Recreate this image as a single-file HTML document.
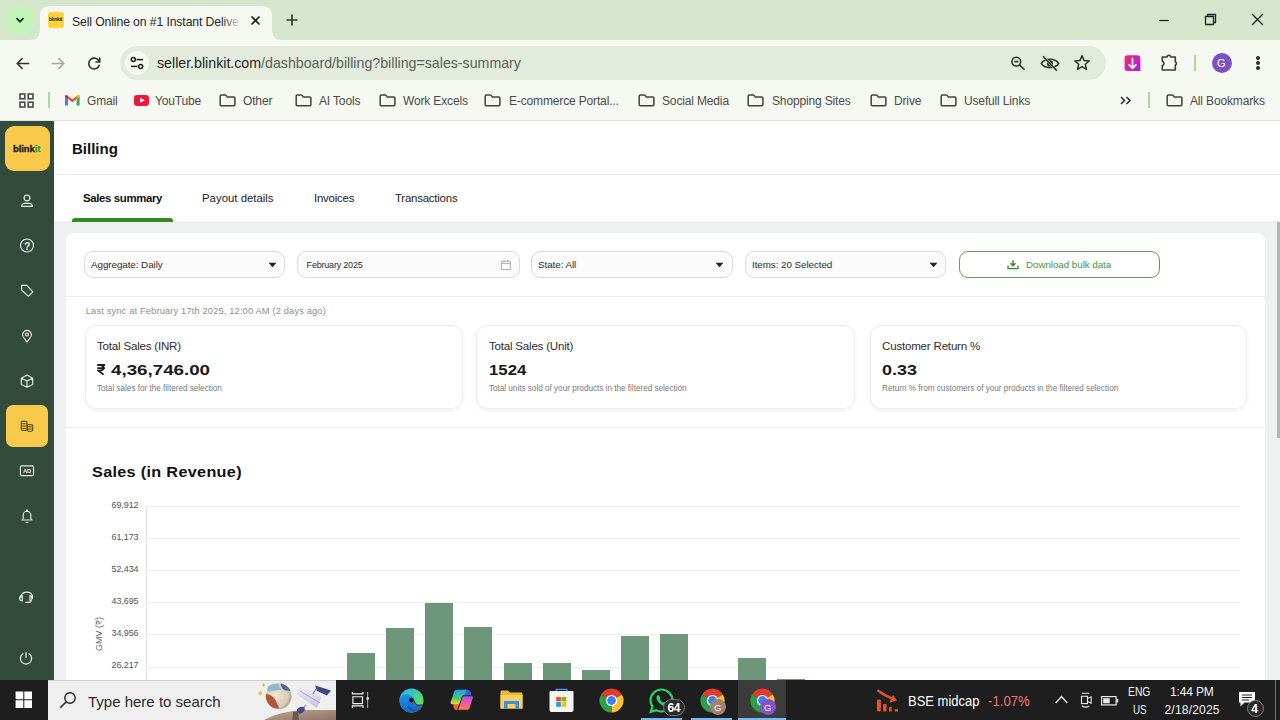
<!DOCTYPE html>
<html><head><meta charset="utf-8">
<style>
*{margin:0;padding:0;box-sizing:border-box}
html,body{width:1280px;height:720px;overflow:hidden;background:#fff;font-family:"Liberation Sans",sans-serif}
.abs{position:absolute}
#tabstrip{position:absolute;left:0;top:0;width:1280px;height:40px;background:#d5e6cd}
#toolbar{position:absolute;left:0;top:40px;width:1280px;height:80px;background:#f6f9f1}
#tbline{position:absolute;left:0;top:120px;width:1280px;height:1px;background:#dfe3dc}
#page{position:absolute;left:0;top:121px;width:1280px;height:559px;background:#eff1f0;overflow:hidden}
#sidebar{position:absolute;left:0;top:0;width:54px;height:559px;background:#334b3a}
#taskbar{position:absolute;left:0;top:680px;width:1280px;height:40px;background:#1e1e1e}
.bm{font-size:12px;color:#4a4c49;letter-spacing:-0.15px}
.box{background:#fbfbfb;border:1px solid #dcdcdc;border-radius:9px}
.ft{font-size:9.8px;color:#2e2e2e;letter-spacing:-0.05px}
.mcard{background:#fff;border:1px solid #ededed;border-radius:11px;box-shadow:0 2px 4px rgba(0,0,0,0.05)}
.t{position:absolute;white-space:nowrap;line-height:1}
</style></head><body>
<div id="tabstrip">
  <svg class="abs" style="left:0;top:0" width="300" height="40" viewBox="0 0 300 40"><path d="M30 40 Q40 40 40 30 V16 Q40 6 50 6 H262 Q272 6 272 16 V30 Q272 40 282 40 Z" fill="#f6f9f1"/></svg>
  <div class="abs" style="left:6px;top:6px;width:28px;height:28px;border-radius:8px;background:#c4f3bc"></div>
  <svg class="abs" style="left:14px;top:14px" width="12" height="12" viewBox="0 0 12 12"><path d="M2.5 4.2 L6 7.7 L9.5 4.2" fill="none" stroke="#1f2a1f" stroke-width="1.8"/></svg>
  <div class="abs" style="left:48px;top:12px;width:16px;height:16px;border-radius:3px;background:#fcd43a"></div>
  <div class="t" style="left:49px;top:17px;font-size:5px;font-weight:bold;color:#222;letter-spacing:-0.2px">blinkit</div>
  <div class="t" style="left:72px;top:16px;font-size:12.2px;color:#262626;letter-spacing:-0.1px">Sell Online on #1 Instant Delive</div>
  <div class="abs" style="left:222px;top:8px;width:20px;height:26px;background:linear-gradient(90deg,rgba(246,249,241,0),#f6f9f1)"></div>
  <svg class="abs" style="left:250px;top:15px" width="11" height="11" viewBox="0 0 11 11"><path d="M1.5 1.5 L9.5 9.5 M9.5 1.5 L1.5 9.5" stroke="#1f1f1f" stroke-width="1.7"/></svg>
  <svg class="abs" style="left:286px;top:14px" width="12" height="12" viewBox="0 0 12 12"><path d="M6 0.5 V11.5 M0.5 6 H11.5" stroke="#2c3a2c" stroke-width="1.7"/></svg>
  <svg class="abs" style="left:1158px;top:14px" width="12" height="12" viewBox="0 0 12 12"><path d="M1 6.5 H11" stroke="#1f1f1f" stroke-width="1.2"/></svg>
  <svg class="abs" style="left:1204px;top:13px" width="13" height="13" viewBox="0 0 13 13"><path d="M1.5 3.5 H9.5 V11.5 H1.5 Z M3.5 3.5 V1.5 H11.5 V9.5 H9.5" fill="none" stroke="#1f1f1f" stroke-width="1.3"/></svg>
  <svg class="abs" style="left:1251px;top:13px" width="13" height="13" viewBox="0 0 13 13"><path d="M1 1 L12 12 M12 1 L1 12" stroke="#1f1f1f" stroke-width="1.4"/></svg>
</div>
<div id="toolbar">
  <svg class="abs" style="left:13.8px;top:14px" width="18" height="18" viewBox="0 0 18 18"><path d="M15.3 9.5 H3.6 M8.6 4.1 L3.2 9.5 L8.6 14.9" fill="none" stroke="#333631" stroke-width="1.5"/></svg>
  <svg class="abs" style="left:49px;top:14px" width="18" height="18" viewBox="0 0 18 18"><path d="M2.7 9.5 H14.4 M9.4 4.1 L14.8 9.5 L9.4 14.9" fill="none" stroke="#a3a8a0" stroke-width="1.5"/></svg>
  <svg class="abs" style="left:85px;top:14px" width="18" height="18" viewBox="0 0 18 18"><path d="M14.2 7.6 A5.4 5.4 0 1 0 14.4 10.8" fill="none" stroke="#333631" stroke-width="1.6"/><path d="M14.8 3.6 V8 H10.4" fill="none" stroke="#333631" stroke-width="1.6"/></svg>
  <div class="abs" style="left:120px;top:6px;width:986px;height:34px;border-radius:17px;background:#e3ebdd"></div>
  <div class="abs" style="left:125px;top:11px;width:24px;height:24px;border-radius:12px;background:#f6f9f1"></div>
  <svg class="abs" style="left:129px;top:15px" width="16" height="16" viewBox="0 0 16 16"><circle cx="4.3" cy="4.6" r="2" fill="none" stroke="#1f1f1f" stroke-width="1.5"/><path d="M7.5 4.6 H14" stroke="#1f1f1f" stroke-width="1.5"/><circle cx="11.7" cy="11.4" r="2" fill="none" stroke="#1f1f1f" stroke-width="1.5"/><path d="M2 11.4 H8.5" stroke="#1f1f1f" stroke-width="1.5"/></svg>
  <div class="t" style="left:157px;top:16px;font-size:14.2px;color:#1f1f1f">seller.blinkit.com<span style="color:#5b605b">/dashboard/billing?billing=sales-summary</span></div>
  <svg class="abs" style="left:1008px;top:14px" width="18" height="18" viewBox="0 0 18 18"><circle cx="8.3" cy="7.6" r="4.4" fill="none" stroke="#30332f" stroke-width="1.6"/><path d="M6.3 7.6 H10.3 M11.5 10.9 L16.5 15.8" stroke="#30332f" stroke-width="1.6"/></svg>
  <svg class="abs" style="left:1040px;top:13px" width="20" height="20" viewBox="0 0 20 20"><path d="M1.3 10.4 C4.5 4.8 15.5 4.8 18.7 10.4 C15.5 16 4.5 16 1.3 10.4 Z" fill="none" stroke="#30332f" stroke-width="1.6"/><circle cx="10" cy="10.4" r="3.1" fill="#30332f"/><path d="M3 3.2 L16.8 17.6" stroke="#e3ebdd" stroke-width="2.3"/><path d="M3 3.2 L16.8 17.6" stroke="#30332f" stroke-width="1.6"/></svg>
  <svg class="abs" style="left:1073px;top:14px" width="18" height="18" viewBox="0 0 18 18"><path d="M9 1.8 L11.1 6.6 L16.2 7 L12.3 10.3 L13.5 15.4 L9 12.7 L4.5 15.4 L5.7 10.3 L1.8 7 L6.9 6.6 Z" fill="none" stroke="#2b2f2b" stroke-width="1.5" stroke-linejoin="round"/></svg>
  <svg class="abs" style="left:1124px;top:15px" width="17" height="17" viewBox="0 0 17 17"><defs><linearGradient id="dlg" x1="0" y1="0" x2="1" y2="1"><stop offset="0" stop-color="#ec3060"/><stop offset="0.5" stop-color="#d022b0"/><stop offset="1" stop-color="#a51ef2"/></linearGradient></defs><path d="M3.5 0.3 H13 Q16.4 0.3 16.4 3.7 V16 H3.5 Q0.6 16 0.6 13 V3.5 Q0.6 0.3 3.5 0.3 Z" fill="url(#dlg)"/><path d="M8.5 2.8 V13.2 M4.6 9.3 L8.5 13.2 L12.4 9.3" fill="none" stroke="#fff" stroke-width="1.7"/></svg>
  <svg class="abs" style="left:1159px;top:13px" width="20" height="20" viewBox="0 0 20 20"><path d="M3.3 4 H8.2 A1.7 1.7 0 0 1 11.6 4 H16.3 V9.1 A1.5 1.5 0 0 1 16.3 12 V17 H3.3 V12.6 A2.3 2.3 0 0 0 3.3 8.2 Z" fill="none" stroke="#3c3d39" stroke-width="1.6" stroke-linejoin="round"/></svg>
  <div class="abs" style="left:1194px;top:15px;width:2px;height:16px;background:#a6dba0"></div>
  <div class="abs" style="left:1212px;top:13px;width:20px;height:20px;border-radius:10px;background:#7c52c2"></div>
  <div class="t" style="left:1217px;top:17.5px;font-size:11px;color:#fff">G</div>
  <div class="abs" style="left:1256px;top:16px;width:4px;height:4px;border-radius:2px;background:#2b2f2b"></div>
  <div class="abs" style="left:1256px;top:21px;width:4px;height:4px;border-radius:2px;background:#2b2f2b"></div>
  <div class="abs" style="left:1256px;top:26px;width:4px;height:4px;border-radius:2px;background:#2b2f2b"></div>
  <!-- bookmarks -->
  <svg class="abs" style="left:19px;top:53px" width="15" height="15" viewBox="0 0 15 15"><g fill="none" stroke="#474a47" stroke-width="1.6"><rect x="1" y="1" width="4.8" height="4.8"/><rect x="9.2" y="1" width="4.8" height="4.8"/><rect x="1" y="9.2" width="4.8" height="4.8"/><rect x="9.2" y="9.2" width="4.8" height="4.8"/></g></svg>
  <div class="abs" style="left:48px;top:52px;width:2px;height:16px;background:#a6dba0"></div>
  <svg class="abs" style="left:65px;top:55px" width="15" height="11" viewBox="0 0 15 11"><path d="M0 1.5 V10.5 H3 V4 Z" fill="#4285f4"/><path d="M14.6 1.5 V10.5 H11.6 V4 Z" fill="#34a853"/><path d="M0 1.5 Q0 0 1.5 0 L7.3 4.6 L13.1 0 Q14.6 0 14.6 1.5 L7.3 7.3 Z" fill="#ea4335"/><path d="M11.6 1.2 L13.1 0 Q14.6 0 14.6 1.5 L11.6 4 Z" fill="#fbbc04"/><path d="M0 1.5 Q0 0 1.5 0 L3 1.2 V4 L0 1.6Z" fill="#c5221f"/></svg>
  <div class="t bm" style="left:87px;top:54.5px">Gmail</div>
  <div class="abs" style="left:133.8px;top:55px;width:15.6px;height:10.6px;border-radius:3px;background:#f0163a"></div>
  <svg class="abs" style="left:139px;top:57px" width="7" height="7" viewBox="0 0 7 7"><path d="M1 0.8 L5.8 3.3 L1 5.8 Z" fill="#fff"/></svg>
  <div class="t bm" style="left:155px;top:54.5px">YouTube</div>
  <svg class="abs" style="left:219px;top:54px" width="17" height="13" viewBox="0 0 17 13"><path d="M1.2 2 Q1.2 0.9 2.3 0.9 H6 Q6.6 0.9 7 1.4 L8 2.6 Q8.4 3 9 3 H14.8 Q15.9 3 15.9 4.1 V10.6 Q15.9 11.7 14.8 11.7 H2.3 Q1.2 11.7 1.2 10.6 Z" fill="none" stroke="#40413d" stroke-width="1.5"/></svg>
  <div class="t bm" style="left:243px;top:54.5px">Other</div>
  <svg class="abs" style="left:295px;top:54px" width="17" height="13" viewBox="0 0 17 13"><path d="M1.2 2 Q1.2 0.9 2.3 0.9 H6 Q6.6 0.9 7 1.4 L8 2.6 Q8.4 3 9 3 H14.8 Q15.9 3 15.9 4.1 V10.6 Q15.9 11.7 14.8 11.7 H2.3 Q1.2 11.7 1.2 10.6 Z" fill="none" stroke="#40413d" stroke-width="1.5"/></svg>
  <div class="t bm" style="left:319px;top:54.5px">AI Tools</div>
  <svg class="abs" style="left:379px;top:54px" width="17" height="13" viewBox="0 0 17 13"><path d="M1.2 2 Q1.2 0.9 2.3 0.9 H6 Q6.6 0.9 7 1.4 L8 2.6 Q8.4 3 9 3 H14.8 Q15.9 3 15.9 4.1 V10.6 Q15.9 11.7 14.8 11.7 H2.3 Q1.2 11.7 1.2 10.6 Z" fill="none" stroke="#40413d" stroke-width="1.5"/></svg>
  <div class="t bm" style="left:403px;top:54.5px">Work Excels</div>
  <svg class="abs" style="left:484px;top:54px" width="17" height="13" viewBox="0 0 17 13"><path d="M1.2 2 Q1.2 0.9 2.3 0.9 H6 Q6.6 0.9 7 1.4 L8 2.6 Q8.4 3 9 3 H14.8 Q15.9 3 15.9 4.1 V10.6 Q15.9 11.7 14.8 11.7 H2.3 Q1.2 11.7 1.2 10.6 Z" fill="none" stroke="#40413d" stroke-width="1.5"/></svg>
  <div class="t bm" style="left:509px;top:54.5px">E-commerce Portal...</div>
  <svg class="abs" style="left:638px;top:54px" width="17" height="13" viewBox="0 0 17 13"><path d="M1.2 2 Q1.2 0.9 2.3 0.9 H6 Q6.6 0.9 7 1.4 L8 2.6 Q8.4 3 9 3 H14.8 Q15.9 3 15.9 4.1 V10.6 Q15.9 11.7 14.8 11.7 H2.3 Q1.2 11.7 1.2 10.6 Z" fill="none" stroke="#40413d" stroke-width="1.5"/></svg>
  <div class="t bm" style="left:662px;top:54.5px">Social Media</div>
  <svg class="abs" style="left:747px;top:54px" width="17" height="13" viewBox="0 0 17 13"><path d="M1.2 2 Q1.2 0.9 2.3 0.9 H6 Q6.6 0.9 7 1.4 L8 2.6 Q8.4 3 9 3 H14.8 Q15.9 3 15.9 4.1 V10.6 Q15.9 11.7 14.8 11.7 H2.3 Q1.2 11.7 1.2 10.6 Z" fill="none" stroke="#40413d" stroke-width="1.5"/></svg>
  <div class="t bm" style="left:772px;top:54.5px">Shopping Sites</div>
  <svg class="abs" style="left:870px;top:54px" width="17" height="13" viewBox="0 0 17 13"><path d="M1.2 2 Q1.2 0.9 2.3 0.9 H6 Q6.6 0.9 7 1.4 L8 2.6 Q8.4 3 9 3 H14.8 Q15.9 3 15.9 4.1 V10.6 Q15.9 11.7 14.8 11.7 H2.3 Q1.2 11.7 1.2 10.6 Z" fill="none" stroke="#40413d" stroke-width="1.5"/></svg>
  <div class="t bm" style="left:894px;top:54.5px">Drive</div>
  <svg class="abs" style="left:940px;top:54px" width="17" height="13" viewBox="0 0 17 13"><path d="M1.2 2 Q1.2 0.9 2.3 0.9 H6 Q6.6 0.9 7 1.4 L8 2.6 Q8.4 3 9 3 H14.8 Q15.9 3 15.9 4.1 V10.6 Q15.9 11.7 14.8 11.7 H2.3 Q1.2 11.7 1.2 10.6 Z" fill="none" stroke="#40413d" stroke-width="1.5"/></svg>
  <div class="t bm" style="left:964px;top:54.5px">Usefull Links</div>
  <svg class="abs" style="left:1166px;top:54px" width="17" height="13" viewBox="0 0 17 13"><path d="M1.2 2 Q1.2 0.9 2.3 0.9 H6 Q6.6 0.9 7 1.4 L8 2.6 Q8.4 3 9 3 H14.8 Q15.9 3 15.9 4.1 V10.6 Q15.9 11.7 14.8 11.7 H2.3 Q1.2 11.7 1.2 10.6 Z" fill="none" stroke="#40413d" stroke-width="1.5"/></svg>
  <div class="t bm" style="left:1190px;top:54.5px">All Bookmarks</div>
  <svg class="abs" style="left:1120px;top:56px" width="12" height="9" viewBox="0 0 12 9"><path d="M1 1 L4.5 4.5 L1 8 M6.5 1 L10 4.5 L6.5 8" fill="none" stroke="#2b2f2b" stroke-width="1.5"/></svg>
  <div class="abs" style="left:1148px;top:52px;width:2px;height:16px;background:#a6dba0"></div>
</div>
<div id="tbline"></div>
<div id="page">
  <div id="sidebar">
    <div class="abs" style="left:5px;top:5px;width:45px;height:45px;border-radius:9px;background:#f8c94a"></div>
    <div class="t" style="left:13px;top:22.8px;font-size:9.4px;font-weight:bold;color:#1d1d1b;letter-spacing:-0.05px;-webkit-text-stroke:0.35px #1d1d1b">blink<span style="color:#2f9e2f;-webkit-text-stroke:0.35px #2f9e2f">it</span></div>
    <div class="abs" style="left:6px;top:284px;width:42px;height:42px;border-radius:7px;background:#f8c94a"></div>
    <svg class="abs" style="left:0;top:0" width="54" height="559" viewBox="0 121 54 559">
    <g fill="none" stroke="#e6ece6" stroke-width="1.15" stroke-linejoin="round" stroke-linecap="round">
      <circle cx="27" cy="198" r="2.9"/>
      <path d="M21.6 206.3 Q21.9 204.8 23 203.8 Q23.6 203.3 24.4 203.3 H29.6 Q30.4 203.3 31 203.8 Q32.1 204.8 32.4 206.3 Z"/>
      <circle cx="27" cy="245.5" r="6.5"/>
      <path d="M21.6 285.4 H26.8 L32.9 291.9 L28.4 296.3 L21.6 290 Z"/>
      <path d="M27 342.2 L23.3 337 A4.3 4.3 0 1 1 30.7 337 Z"/>
      <circle cx="27" cy="334.5" r="1.5"/>
      <path d="M27 375 L32.7 378.3 V384.4 L27 387.2 L21.3 384.4 V378.3 Z M21.3 378.3 L27 381 L32.7 378.3 M27 381 V387"/>
      <rect x="20.4" y="465.8" width="13.1" height="9.8" rx="1.4"/>
      <path d="M22 520 H32 L30.8 518.5 V515 A3.8 3.8 0 0 0 23.2 515 V518.5 Z M26 522.2 H28"/>
      <circle cx="27" cy="510.7" r="0.6"/>
      <path d="M21 598 V596 A6 5.5 0 0 1 32.5 596 V598 M31.3 600.5 Q31.2 602.3 29.5 602.3 H25.8"/>
      <path d="M22.3 595.6 V601 Q19.6 600.8 19.6 598.3 Q19.6 595.8 22.3 595.6 Z M30 595.6 V601 Q32 600.6 32 598.3 Q32 596 30 595.6 Z"/>
      <path d="M23 653.8 A5.6 5.6 0 1 0 29 653.8 M26 652.5 V657.6" stroke-width="1.25"/>
    </g>
    <text x="27.2" y="249.6" text-anchor="middle" font-family="Liberation Sans" font-weight="bold" font-size="10.5" fill="#e6ece6">?</text>
    <text x="27.1" y="473.2" text-anchor="middle" font-family="Liberation Sans" font-weight="bold" font-size="5.8" fill="#e6ece6">AD</text>
    <g fill="none" stroke="#5a521c" stroke-width="1.1">
      <rect x="21.2" y="421.4" width="5.8" height="9" rx="1.2"/>
      <path d="M21.5 423.7 H26.7 M21.5 426 H26.7 M21.5 428.2 H26.7"/>
      <rect x="27.4" y="424.6" width="5.3" height="6.6" rx="1.2"/>
      <path d="M27.6 426.8 H32.5 M27.6 429 H32.5"/>
    </g>
    </svg>
  </div>
  <div class="abs" style="left:54px;top:0;width:1226px;height:54px;background:#fff"></div>
  <div class="t" style="left:72px;top:20px;font-size:15px;font-weight:bold;color:#111">Billing</div>
  <div class="abs" style="left:54px;top:53px;width:1226px;height:1px;background:#ebebeb"></div>
  <div class="abs" style="left:54px;top:54px;width:1226px;height:46px;background:#fff"></div>
  <div class="t" style="left:83px;top:72px;font-size:11.4px;font-weight:bold;color:#111;letter-spacing:-0.35px">Sales summary</div>
  <div class="t" style="left:202px;top:72px;font-size:11.4px;color:#222;letter-spacing:0px">Payout details</div>
  <div class="t" style="left:314px;top:72px;font-size:11.4px;color:#222;letter-spacing:-0.2px">Invoices</div>
  <div class="t" style="left:395px;top:72px;font-size:11.4px;color:#222;letter-spacing:-0.2px">Transactions</div>
  <div class="abs" style="left:72px;top:97px;width:101px;height:4px;border-radius:3px 3px 0 0;background:#318b22"></div>
  <div class="abs" style="left:1277px;top:101px;width:3px;height:216px;background:#b5b7b6"></div>
  <div id="card" class="abs" style="left:66px;top:112px;width:1199px;height:600px;border-radius:8px;background:#fff">
    <div class="abs box" style="left:18px;top:18px;width:201px;height:27px"></div>
    <div class="t ft" style="left:25px;top:27.3px">Aggregate: Daily</div>
    <svg class="abs" style="left:202px;top:29px" width="9" height="6" viewBox="0 0 9 6"><path d="M0.5 0.8 H8.5 L4.5 5.2 Z" fill="#222"/></svg>
    <div class="abs box" style="left:231.3px;top:18px;width:222.7px;height:27px"></div>
    <div class="t ft" style="left:240.6px;top:27.6px;font-size:9px;letter-spacing:-0.2px">February 2025</div>
    <svg class="abs" style="left:434px;top:26px" width="11" height="11" viewBox="0 0 11 11"><path d="M1.4 2.3 H10.3 V10.5 H1.4 Z M1.4 4.4 H10.3 M3.9 1 V2.3 M7.8 1 V2.3" fill="none" stroke="#9a9a9a" stroke-width="0.8"/></svg>
    <div class="abs box" style="left:465px;top:18px;width:202px;height:27px"></div>
    <div class="t ft" style="left:472px;top:27.3px">State: All</div>
    <svg class="abs" style="left:649px;top:29px" width="9" height="6" viewBox="0 0 9 6"><path d="M0.5 0.8 H8.5 L4.5 5.2 Z" fill="#222"/></svg>
    <div class="abs box" style="left:679px;top:18px;width:201px;height:27px"></div>
    <div class="t ft" style="left:686px;top:27.3px">Items: 20 Selected</div>
    <svg class="abs" style="left:863px;top:29px" width="9" height="6" viewBox="0 0 9 6"><path d="M0.5 0.8 H8.5 L4.5 5.2 Z" fill="#222"/></svg>
    <div class="abs" style="left:893px;top:18px;width:201px;height:27px;border:1px solid #62a058;border-radius:9px"></div>
    <svg class="abs" style="left:941px;top:25px" width="12" height="12" viewBox="0 0 12 12"><path d="M6 2.2 V7.5 M3.5 5.2 L6 7.7 L8.5 5.2" fill="none" stroke="#3c8a33" stroke-width="1.5"/><path d="M1 7.6 V10.6 H11 V7.6" fill="none" stroke="#3c8a33" stroke-width="1.3"/></svg>
    <div class="t ft" style="left:960px;top:27.3px;color:#4a9341">Download bulk data</div>
    <div class="abs" style="left:0;top:63px;width:1199px;height:1px;background:#ececec"></div>
    <div class="t" style="left:19.8px;top:74px;font-size:9.3px;color:#8e8e8e;letter-spacing:0.15px">Last sync at February 17th 2025, 12:00 AM (2 days ago)</div>
    <div class="abs mcard" style="left:18.6px;top:92.4px;width:378px;height:83.4px"></div>
    <div class="t" style="left:31.0px;top:107.2px;font-size:11.6px;color:#2e2e2e;letter-spacing:-0.22px">Total Sales (INR)</div>
    <div class="t" style="left:31.0px;top:128.8px;font-size:15px;font-weight:bold;color:#1a1a1a"><svg class="abs" style="left:-0.5px;top:2px" width="9" height="11" viewBox="0 0 9 11"><path d="M0.3 1 H8 M0.3 4.2 H8 M1 1 H3.2 C5.6 1 6.4 2.4 6.4 3.8 C6.4 5.6 5 6.7 2.8 6.7 H1.3 L6.6 10.6" fill="none" stroke="#1a1a1a" stroke-width="1.8" stroke-linejoin="miter"/></svg><span style="display:inline-block;margin-left:14.3px;transform:scaleX(1.25);transform-origin:left top">4,36,746.00</span></div>
    <div class="t" style="left:31.0px;top:151.8px;font-size:8.2px;color:#7a7a7a;letter-spacing:-0.02px">Total sales for the filtered selection</div>
    <div class="abs mcard" style="left:409.8px;top:92.4px;width:379.7px;height:83.4px"></div>
    <div class="t" style="left:422.9px;top:107.2px;font-size:11.6px;color:#2e2e2e;letter-spacing:-0.22px">Total Sales (Unit)</div>
    <div class="t" style="left:422.9px;top:128.8px;font-size:15px;font-weight:bold;color:#1a1a1a;transform:scaleX(1.12);transform-origin:left top">1524</div>
    <div class="t" style="left:422.9px;top:151.8px;font-size:8.2px;color:#7a7a7a;letter-spacing:-0.02px">Total units sold of your products in the filtered selection</div>
    <div class="abs mcard" style="left:803.8px;top:92.4px;width:377.5px;height:83.4px"></div>
    <div class="t" style="left:816px;top:107.2px;font-size:11.6px;color:#2e2e2e;letter-spacing:-0.22px">Customer Return %</div>
    <div class="t" style="left:816px;top:128.8px;font-size:15px;font-weight:bold;color:#1a1a1a;transform:scaleX(1.2);transform-origin:left top">0.33</div>
    <div class="t" style="left:816px;top:151.8px;font-size:8.2px;color:#7a7a7a;letter-spacing:-0.02px">Return % from customers of your products in the filtered selection</div>
    
    <div class="abs" style="left:0;top:194px;width:1199px;height:1px;background:#ececec"></div>
    <div class="t" style="left:26px;top:231.1px;font-size:15px;font-weight:bold;color:#111;letter-spacing:0.3px;transform:scaleX(1.08);transform-origin:left top">Sales (in Revenue)</div>
    <div class="abs" style="left:80px;top:273.0px;width:1094px;height:1px;background:#efefef"></div>
    <div class="t" style="right:1126.5px;top:267.7px;font-size:9px;color:#555;letter-spacing:-0.1px">69,912</div>
    <div class="abs" style="left:80px;top:305.1px;width:1094px;height:1px;background:#efefef"></div>
    <div class="t" style="right:1126.5px;top:299.8px;font-size:9px;color:#555;letter-spacing:-0.1px">61,173</div>
    <div class="abs" style="left:80px;top:337.2px;width:1094px;height:1px;background:#efefef"></div>
    <div class="t" style="right:1126.5px;top:331.9px;font-size:9px;color:#555;letter-spacing:-0.1px">52,434</div>
    <div class="abs" style="left:80px;top:369.3px;width:1094px;height:1px;background:#efefef"></div>
    <div class="t" style="right:1126.5px;top:364.0px;font-size:9px;color:#555;letter-spacing:-0.1px">43,695</div>
    <div class="abs" style="left:80px;top:401.4px;width:1094px;height:1px;background:#efefef"></div>
    <div class="t" style="right:1126.5px;top:396.1px;font-size:9px;color:#555;letter-spacing:-0.1px">34,956</div>
    <div class="abs" style="left:80px;top:433.5px;width:1094px;height:1px;background:#efefef"></div>
    <div class="t" style="right:1126.5px;top:428.2px;font-size:9px;color:#555;letter-spacing:-0.1px">26,217</div>
    <div class="abs" style="left:80px;top:273px;width:1px;height:200px;background:#e2e2e2"></div>
    <div class="t" style="left:33px;top:401px;font-size:9px;color:#666;transform:translate(-50%,-50%) rotate(-90deg);transform-origin:center">GMV (<svg width="5" height="7" viewBox="0 0 5 7" style="display:inline-block;vertical-align:-0.5px"><path d="M0.3 0.7 H4.7 M0.3 2.5 H4.7 M0.8 0.7 H2 C3.4 0.7 3.8 1.6 3.8 2.4 C3.8 3.5 3 4.1 1.8 4.1 H0.9 L3.9 6.7" fill="none" stroke="#666" stroke-width="0.7"/></svg>)</div>
    <div class="abs" style="left:281.30px;top:419.8px;width:28px;height:200px;background:#6e977a"></div>
    <div class="abs" style="left:320.35px;top:394.5px;width:28px;height:200px;background:#6e977a"></div>
    <div class="abs" style="left:359.40px;top:369.6px;width:28px;height:200px;background:#6e977a"></div>
    <div class="abs" style="left:398.45px;top:393.8px;width:28px;height:200px;background:#6e977a"></div>
    <div class="abs" style="left:437.50px;top:429.6px;width:28px;height:200px;background:#6e977a"></div>
    <div class="abs" style="left:476.55px;top:429.8px;width:28px;height:200px;background:#6e977a"></div>
    <div class="abs" style="left:515.60px;top:437.0px;width:28px;height:200px;background:#6e977a"></div>
    <div class="abs" style="left:554.65px;top:402.8px;width:28px;height:200px;background:#6e977a"></div>
    <div class="abs" style="left:593.70px;top:401.2px;width:28px;height:200px;background:#6e977a"></div>
    <div class="abs" style="left:671.80px;top:425.0px;width:28px;height:200px;background:#6e977a"></div>
    <div class="abs" style="left:710.85px;top:445.5px;width:28px;height:200px;background:#6e977a"></div>
    

  </div>

</div>
<div id="taskbar">
  <svg class="abs" style="left:15px;top:11px" width="18" height="18" viewBox="0 0 18 18"><path d="M0.6 0.6 H8.3 V8.3 H0.6 Z M9.3 0.6 H17 V8.3 H9.3 Z M0.6 9.3 H8.3 V17 H0.6 Z M9.3 9.3 H17 V17 H9.3 Z" fill="#fff"/></svg>
  <div class="abs" style="left:48px;top:0;width:288px;height:40px;background:#efefef;border-top:1px solid #cdcdcd"></div>
  <svg class="abs" style="left:59px;top:11px" width="18" height="18" viewBox="0 0 18 18"><circle cx="11" cy="7" r="5.2" fill="none" stroke="#222" stroke-width="1.4"/><path d="M7.3 10.7 L1.2 16.8" stroke="#222" stroke-width="1.5"/></svg>
  <div class="t" style="left:88px;top:14px;font-size:15px;color:#2a2a2a">Type here to search</div>
  <svg class="abs" style="left:255px;top:0px" width="81" height="40" viewBox="0 0 81 40">
    <defs>
      <linearGradient id="hill" x1="0" y1="0" x2="1" y2="1"><stop offset="0" stop-color="#c2a895"/><stop offset="1" stop-color="#8d7262"/></linearGradient>
      <radialGradient id="glb" cx="0.4" cy="0.45" r="0.6"><stop offset="0" stop-color="#efe4d0"/><stop offset="0.8" stop-color="#d9cbb3"/><stop offset="1" stop-color="#a8a391"/></radialGradient>
      <linearGradient id="tube" x1="0" y1="0" x2="0" y2="1"><stop offset="0" stop-color="#f4f2fb"/><stop offset="1" stop-color="#c4c0e0"/></linearGradient>
    </defs>
    <path d="M9 40 Q25 31 50 30 H81 V40 Z" fill="url(#hill)"/>
    <circle cx="23.6" cy="16.3" r="12.9" fill="url(#glb)"/>
    <path d="M11 14 C15 14 19 17 21 21 C22 24 24 26 24 28.5 C17 29 11.5 24 10.9 17 Z" fill="#b5553a"/>
    <path d="M13 6.5 C16 4 21 3.4 23.5 3.6 C23 6 25 8 27 10 C22 10 17 11 12.5 11.5 C12 9.5 12.3 8 13 6.5 Z" fill="#8fb7cf"/>
    <path d="M25.5 3.5 C30 4.2 34 7 35.5 11 C32 11 29.5 10 27.5 9 C26.5 7 25.8 5.5 25.5 3.5 Z" fill="#4b6b95"/>
    <path d="M8.6 3 L10.3 5 L8.6 7 L6.9 5 Z M5.3 10.8 L7.6 13.3 L5.3 15.8 L3 13.3 Z" fill="#e6c43c"/>
    <path d="M41.5 14 L45.8 4.6 L66.4 17 L62 28 Z" fill="url(#tube)"/><path d="M58 14 L61 9" stroke="#8a86b8" stroke-width="1.4"/>
    <path d="M45 11 L65 23" stroke="#9f9ac8" stroke-width="0.8"/>
    <path d="M60 5.5 L65 7 L76 10.5 L72 15.5 L62 11 Z" fill="#3f4788"/>
    <path d="M51 25 L47 30" stroke="#9b98c0" stroke-width="1.6"/>
    <ellipse cx="45.8" cy="30.2" rx="4.2" ry="3" fill="#434a8e" transform="rotate(-30 45.8 30.2)"/>
    <path d="M38 32 L43 31 L44 40 L37.5 40 Z" fill="#6d5953"/>
  </svg>
  <svg class="abs" style="left:350px;top:11px" width="20" height="18" viewBox="0 0 20 18"><g fill="none" stroke="#f2f2f2" stroke-width="1.15"><path d="M2.4 1 V2.9 H13 V1 M2.9 5.7 H12.5 V12.6 H2.9 Z M2.4 17 V14.9 H13 V17"/></g><path d="M17.6 1 V17" stroke="#a8a8a8" stroke-width="1"/><rect x="16.5" y="6.3" width="2.3" height="2.3" fill="#f2f2f2"/></svg>
  <svg class="abs" style="left:399px;top:8px" width="25" height="25" viewBox="0 0 25 25">
    <defs><linearGradient id="eg1" x1="0" y1="0" x2="1" y2="0.6"><stop offset="0" stop-color="#2fb4ea"/><stop offset="0.55" stop-color="#3cc8b0"/><stop offset="1" stop-color="#66de52"/></linearGradient><linearGradient id="eg2" x1="0" y1="0" x2="0.3" y2="1"><stop offset="0" stop-color="#1f97e8"/><stop offset="1" stop-color="#1565c8"/></linearGradient></defs>
    <circle cx="12.5" cy="12.5" r="12" fill="url(#eg1)"/>
    <path d="M1 9.5 C3 6.8 6.5 5.8 9.5 6.5 C13 7.3 15 9.8 15.2 12.8 C15.5 15.5 17.5 17.3 20.5 17.3 C21.6 17.3 22.6 17 23.3 16.6 C21.6 21.5 17.4 24.5 12.5 24.5 C5.9 24.5 0.5 19.1 0.5 12.5 C0.5 11.4 0.7 10.4 1 9.5 Z" fill="url(#eg2)"/>
    <path d="M9 18 C11 21.5 15 23 19 22.5" fill="none" stroke="#0f56a8" stroke-width="2" opacity="0.6"/>
    <circle cx="12.4" cy="12.2" r="2.4" fill="#1e1e1e"/>
    <path d="M15.2 12.8 C15.5 15.5 17.5 17.3 20.5 17.3 C21.6 17.3 22.6 17 23.3 16.6" fill="none" stroke="#1b1b1b" stroke-width="1"/>
  </svg>
  <svg class="abs" style="left:450px;top:9px" width="24" height="22" viewBox="0 0 24 22">
    <defs><linearGradient id="cp1" x1="0" y1="0" x2="0" y2="1"><stop offset="0" stop-color="#2a9cf5"/><stop offset="0.55" stop-color="#3fc97a"/><stop offset="1" stop-color="#f6d21a"/></linearGradient><linearGradient id="cp2" x1="0" y1="0" x2="0" y2="1"><stop offset="0" stop-color="#a852e8"/><stop offset="0.55" stop-color="#f05aa0"/><stop offset="1" stop-color="#ff8a3a"/></linearGradient></defs>
    <path d="M13 0.8 H17.5 Q20.6 0.8 21 4.5 L21.4 8 H13 Z" fill="#2e5fe6"/>
    <path d="M3.5 14.5 H11 V21.2 H7.5 Q4 21.2 3.5 17.5 Z" fill="#f0623a"/>
    <path d="M6.3 0.8 H16.5 L11.3 15.2 H2.2 Q0.1 15.2 0.7 13.1 L4.1 2.8 Q4.8 0.8 6.3 0.8 Z" fill="url(#cp1)"/>
    <path d="M17.7 21.2 H7.5 L12.7 6.8 H21.8 Q23.9 6.8 23.3 8.9 L19.9 19.2 Q19.2 21.2 17.7 21.2 Z" fill="url(#cp2)" stroke="#1c1c1c" stroke-width="0.9"/>
  </svg>
  <svg class="abs" style="left:500px;top:10px" width="23" height="20" viewBox="0 0 23 20"><path d="M0.5 2 C0.5 1 1 0.5 2 0.5 H8 L10 2.5 H21 C22 2.5 22.5 3 22.5 4 V18.5 H0.5 Z" fill="#e9b93a"/><path d="M0.5 5 H22.5 V18.5 H0.5 Z" fill="#f7d063"/><path d="M4 18.5 V11 H19 V18.5 H15.5 V14 H7.5 V18.5 Z" fill="#3d8fdc"/></svg>
  <svg class="abs" style="left:549px;top:8px" width="25" height="25" viewBox="0 0 25 25"><path d="M6.5 5 L7.3 1.3 H17.7 L18.5 5" fill="none" stroke="#3fa1e8" stroke-width="1.3"/><path d="M0.5 4 Q0.5 3 1.5 3 H23.5 Q24.5 3 24.5 4 V22 Q24.5 24 22.5 24 H2.5 Q0.5 24 0.5 22 Z" fill="#f4f4f4"/><rect x="7.2" y="9" width="4.7" height="4.4" fill="#f25022"/><rect x="12.6" y="9" width="4.7" height="4.4" fill="#7fba00"/><rect x="7.2" y="14.2" width="4.7" height="4.6" fill="#00a4ef"/><rect x="12.6" y="14.2" width="4.7" height="4.6" fill="#ffb900"/></svg>
  <svg class="abs" style="left:599.2px;top:7.5px" width="25" height="25" viewBox="0 0 25 25">
    <path d="M12.5 12.5 L2.1 6.5 A12 12 0 0 1 22.9 6.5 Z" fill="#e33b2e"/>
    <path d="M12.5 12.5 L22.9 6.5 A12 12 0 0 1 12.5 24.5 Z" fill="#fbc02d"/>
    <path d="M12.5 12.5 L12.5 24.5 A12 12 0 0 1 2.1 6.5 Z" fill="#2e9e48"/>
    <circle cx="12.5" cy="12.5" r="5.6" fill="#fff"/><circle cx="12.5" cy="12.5" r="4.4" fill="#3c7ff0"/></svg>
  <svg class="abs" style="left:649px;top:8px" width="26" height="26" viewBox="0 0 26 26"><path d="M12.5 1.5 C18.6 1.5 23.5 6.4 23.5 12.5 C23.5 18.6 18.6 23.5 12.5 23.5 C10.6 23.5 8.8 23 7.3 22.2 L1.8 23.8 L3.5 18.5 C2.3 16.8 1.5 14.7 1.5 12.5 C1.5 6.4 6.4 1.5 12.5 1.5 Z" fill="none" stroke="#2bd366" stroke-width="2.2"/><path d="M8.5 7.5 C9 7 9.8 7 10.2 7.6 L11.2 9.6 C11.4 10 11.2 10.5 10.8 10.9 C11.5 12.5 12.6 13.8 14.3 14.6 C14.7 14.2 15.2 14 15.6 14.2 L17.5 15.2 C18 15.5 18 16.3 17.5 16.8 C16.5 17.8 15 18 13 17 C10.5 15.8 8.5 13.5 7.7 11 C7.2 9.5 7.7 8.3 8.5 7.5 Z" fill="#2bd366"/></svg>
  <div class="abs" style="left:663px;top:19px;width:22px;height:17px;border-radius:9px;background:#2b2b2b;border:1px solid #777"></div>
  <div class="t" style="left:667.5px;top:22px;font-size:12px;font-weight:bold;color:#fff;letter-spacing:-0.3px">64</div>
  <div class="abs" style="left:738px;top:0;width:48px;height:40px;background:#3b3b3b"></div><svg class="abs" style="left:699.5px;top:7.5px" width="25" height="25" viewBox="0 0 25 25">
    <path d="M12.5 12.5 L2.1 6.5 A12 12 0 0 1 22.9 6.5 Z" fill="#e33b2e"/>
    <path d="M12.5 12.5 L22.9 6.5 A12 12 0 0 1 12.5 24.5 Z" fill="#fbc02d"/>
    <path d="M12.5 12.5 L12.5 24.5 A12 12 0 0 1 2.1 6.5 Z" fill="#2e9e48"/>
    <circle cx="12.5" cy="12.5" r="5.6" fill="#fff"/><circle cx="12.5" cy="12.5" r="4.4" fill="#3c7ff0"/></svg><div class="abs" style="left:710px;top:19px;width:16px;height:16px;border-radius:8px;background:#a2806f"></div><div class="t" style="left:714px;top:23px;font-size:9.5px;color:#f3f3f3">G</div><svg class="abs" style="left:749.5px;top:7.5px" width="25" height="25" viewBox="0 0 25 25">
    <path d="M12.5 12.5 L2.1 6.5 A12 12 0 0 1 22.9 6.5 Z" fill="#e33b2e"/>
    <path d="M12.5 12.5 L22.9 6.5 A12 12 0 0 1 12.5 24.5 Z" fill="#fbc02d"/>
    <path d="M12.5 12.5 L12.5 24.5 A12 12 0 0 1 2.1 6.5 Z" fill="#2e9e48"/>
    <circle cx="12.5" cy="12.5" r="5.6" fill="#fff"/><circle cx="12.5" cy="12.5" r="4.4" fill="#3c7ff0"/></svg><div class="abs" style="left:760px;top:19px;width:16px;height:16px;border-radius:8px;background:#8553c9"></div><div class="t" style="left:764px;top:23px;font-size:9.5px;color:#f3f3f3">G</div><div class="abs" style="left:738px;top:38px;width:48px;height:2px;background:#76b9ed"></div>
  <div class="abs" style="left:641px;top:38px;width:41px;height:2px;background:#76b9ed"></div>
  <div class="abs" style="left:691px;top:38px;width:41px;height:2px;background:#76b9ed"></div>
  <svg class="abs" style="left:874px;top:9px" width="26" height="24" viewBox="0 0 26 24"><g fill="#e1532b"><path d="M4.2 1.7 Q11 7 18.5 9.6" fill="none" stroke="#e1532b" stroke-width="2.5" stroke-linecap="round"/><path d="M23 11.6 L15.3 13.8 L19 5.8 Z"/><rect x="2.9" y="10.5" width="4" height="12" rx="1"/><rect x="9" y="15" width="3.6" height="7.5" rx="0.8"/><rect x="15" y="18" width="2.7" height="4.5" rx="0.6"/><rect x="20.5" y="20" width="3.5" height="2.5" rx="0.6"/></g></svg>
  <div class="t" style="left:908px;top:14px;font-size:13px;color:#fff;transform:scaleY(1.1);transform-origin:left top">BSE midcap</div>
  <div class="t" style="left:988px;top:14px;font-size:13.2px;color:#f2726a;transform:scaleY(1.1);transform-origin:left top">-1.07%</div>
  <svg class="abs" style="left:1055px;top:15px" width="13" height="9" viewBox="0 0 13 9"><path d="M0.7 8 L6.5 1.5 L12.3 8" fill="none" stroke="#e8e8e8" stroke-width="1.3"/></svg>
  <svg class="abs" style="left:1079px;top:12px" width="15" height="17" viewBox="0 0 15 17"><g fill="none" stroke="#e6e6e6" stroke-width="1.1"><rect x="2.5" y="4.3" width="6" height="7.3"/><path d="M8.5 6.5 L12.2 4.8 V11.1 L8.5 9.4 M3 1.3 H10.3 M2.8 14 Q6.6 16.2 10.4 14"/></g></svg>
  <svg class="abs" style="left:1101px;top:16px" width="18" height="10" viewBox="0 0 18 10"><rect x="0.6" y="0.6" width="14.5" height="8.3" fill="none" stroke="#e8e8e8" stroke-width="1.2"/><rect x="2.2" y="2.2" width="6.5" height="5.1" fill="#e8e8e8"/><rect x="15.5" y="3" width="1.8" height="3.5" fill="#e8e8e8"/></svg>
  <div class="t" style="left:1128.3px;top:5.8px;font-size:12px;color:#f4f4f4;transform:scaleX(0.86);transform-origin:left top">ENG</div>
  <div class="t" style="left:1133px;top:23.6px;font-size:12px;color:#f4f4f4;transform:scaleX(0.82);transform-origin:left top">US</div>
  <div class="t" style="left:1170px;top:5.8px;font-size:12px;color:#f4f4f4;letter-spacing:-0.15px">1:44 PM</div>
  <div class="t" style="left:1164.5px;top:23.6px;font-size:12px;color:#f4f4f4;letter-spacing:0.2px">2/18/2025</div>
  <svg class="abs" style="left:1238px;top:11px" width="18" height="17" viewBox="0 0 18 17"><path d="M1 1 H17 V11.5 H6.5 L2.5 15.5 V11.5 H1 Z" fill="#fff"/><path d="M4 4 H14 M4 6.5 H14 M4 9 H11" stroke="#1e1e1e" stroke-width="1"/></svg>
  <div class="abs" style="left:1246.5px;top:19.5px;width:17px;height:17px;border-radius:9px;background:#2a2a2a;border:1px solid #808080"></div>
  <div class="t" style="left:1251.3px;top:22.5px;font-size:12px;font-weight:bold;color:#fff">4</div>
  <div class="abs" style="left:1275px;top:0;width:1px;height:40px;background:#707070"></div>
</div>
</body></html>
